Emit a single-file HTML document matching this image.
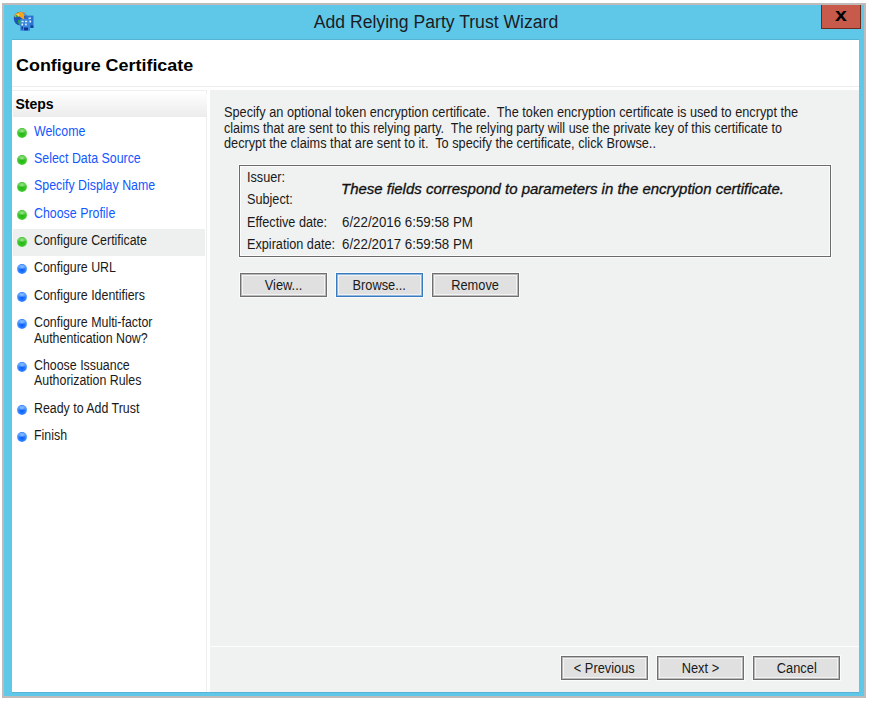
<!DOCTYPE html>
<html><head><meta charset="utf-8">
<style>
*{margin:0;padding:0;box-sizing:border-box}
html,body{width:870px;height:702px;background:#fff;overflow:hidden;position:relative;font-family:"Liberation Sans",sans-serif;color:#1a1a1a}
.a{position:absolute;white-space:nowrap}
#frame{position:absolute;left:2px;top:3px;width:864px;height:695px;background:#bfbbbb}
#cyan{position:absolute;left:4px;top:5px;width:860px;height:691px;background:#5fc8e9}
#content{position:absolute;left:12px;top:40px;width:847px;height:652px;background:#fff;box-shadow:0 -1px 0 #55b3d3,0 1px 0 #5ab3d6}
#title{left:6px;width:860px;top:12px;line-height:20px;font-size:17.6px;text-align:center;color:#1c1c24}
#closex{left:821px;top:5px;width:40px;height:24px;text-align:center;font-size:19px;font-weight:bold;line-height:20px;color:#000;transform:scaleX(1.12)}
#close{left:821px;top:5px;width:40px;height:24px;background:#c75a4b;border:1px solid #6e2a1c;border-top:none}
#hdr{left:16px;top:56px;line-height:20px;font-size:16px;font-weight:bold;color:#000;transform:scaleX(1.12);transform-origin:0 0}
.sep{position:absolute;height:1px;background:#ededed}
#left{position:absolute;left:12px;top:90px;width:195px;height:602px;background:#fff;border-top:1px solid #efefef;border-right:1px solid #eeeeee}
#stepsbar{position:absolute;left:13px;top:94px;width:194px;height:23px;background:linear-gradient(#fdfdfd,#ececec)}
#steps{left:15.5px;top:96px;line-height:16px;font-size:14px;font-weight:bold;color:#000}
.it{position:absolute;left:34px;font-size:14px;line-height:15.5px;color:#1a1a1a;white-space:nowrap;transform:scaleX(0.885);transform-origin:0 0}
.lk{color:#1257ff}
.dot{position:absolute;left:17px;width:10px;height:10px;border-radius:50%}
.g{background:radial-gradient(ellipse 40% 25% at 50% 30%,rgba(200,240,190,.8),rgba(200,240,190,0)),radial-gradient(circle at 50% 55%,#1fb80f 0,#36c425 45%,#5fd04c 62%,#22b014 80%,#22a814 100%)}
.b{background:radial-gradient(ellipse 40% 25% at 50% 30%,rgba(170,215,255,.85),rgba(170,215,255,0)),radial-gradient(circle at 50% 58%,#0658ff 0,#2a7cff 42%,#5aa2ff 60%,#1a68ff 80%,#0f5cf5 100%)}
#hl{position:absolute;left:13px;top:229px;width:192px;height:27px;background:#eef0f0}
#right{position:absolute;left:210px;top:90px;width:649px;height:602px;background:#f0f1f1}
#wline{position:absolute;left:210px;top:646px;width:649px;height:1px;background:#fdfdfd}
.p{left:224px;font-size:14px;line-height:15.5px;color:#1a1a1a;transform:scaleX(0.905);transform-origin:0 0}
#box{position:absolute;left:239px;top:165px;width:592px;height:92px;border:1px solid #6a6a6a;box-shadow:0 0 0 1px #fcfcfc,inset 0 0 0 1px #fcfcfc}
.lb{font-size:14px;line-height:15.5px;color:#1a1a1a;transform:scaleX(0.905);transform-origin:0 0}
#ital{left:341px;font-size:14px;font-style:italic;line-height:15.5px;color:#111;-webkit-text-stroke:0.3px #111;transform:scaleX(1.07);transform-origin:0 0}
.btn{position:absolute;width:87px;height:24px;background:#e0e0e0;border:1px solid #707070;box-shadow:0 0 0 1px #fbfbfb,inset 0 0 0 1px #b8b8b8,inset 0 0 0 2px #f3f3f3;font-size:14px;line-height:22px;text-align:center;color:#1a1a1a}
.btn span{display:inline-block;transform:scaleX(0.915)}
.btn.f{border-color:#3a7bbf;box-shadow:0 0 0 1px #fbfbfb,inset 0 0 0 1px #8fb6dc,inset 0 0 0 2px #f2f2f2}
</style></head><body>
<div id="frame"></div>
<div id="cyan"></div>
<div class="a" id="title">Add Relying Party Trust Wizard</div>
<div class="a" id="close"></div>
<div class="a" id="closex">x</div>
<svg class="a" style="left:10px;top:8px" width="30" height="25" viewBox="0 0 30 25">
<circle cx="10.5" cy="10.6" r="6.8" fill="#1d56b8"/>
<path d="M6 5.5 Q10 3 14.5 4.2 L16.5 6 L14 8 L14.5 11.5 L12 10.5 L9.5 8.5 L7 8 L5 9.5 L4.3 7.5 Z" fill="#f3a61a"/>
<path d="M6.5 6.5 L8.5 5.8 L9.5 7.6 L7.8 9 Z" fill="#ffd27a"/>
<path d="M5.5 7 L7.5 7.2 L8 8.8 L6.5 9.2 Z" fill="#25b526"/>
<path d="M8 12 L11 12.5 L11.5 16 L10 17.5 L8.5 15.5 Z" fill="#2cb52a"/>
<path d="M12 3.8 Q15.5 4.5 17 7 L15 8 Z" fill="#4f9be6"/>
<rect x="15.3" y="7.6" width="8.2" height="12.4" fill="#2a73d0"/>
<rect x="10.3" y="11" width="9.7" height="11.8" fill="#3a87dc"/>
<rect x="11.5" y="12.8" width="2.2" height="1.4" fill="#d8ecff"/>
<rect x="15" y="12.8" width="2.2" height="1.4" fill="#d8ecff"/>
<rect x="11.5" y="15.6" width="1.6" height="1.8" fill="#e6f3ff"/>
<rect x="15" y="15.6" width="1.8" height="1.8" fill="#cfe6ff"/>
<rect x="18.5" y="9.5" width="2.5" height="1.4" fill="#cfe6ff"/>
<rect x="19.5" y="12.5" width="1.6" height="2" fill="#e6f3ff"/>
<rect x="11.5" y="18.5" width="1.4" height="3" fill="#0d3f9f"/>
<rect x="14" y="19.5" width="4" height="2.8" fill="#0a3590"/>
<rect x="20.7" y="17.6" width="2.6" height="2" fill="#0a3590"/>
</svg>
<div id="content"></div>
<div class="a" id="hdr">Configure Certificate</div>
<div class="sep" style="left:12px;top:86px;width:847px"></div>
<div id="left"></div>
<div id="stepsbar"></div>
<div class="a" id="steps">Steps</div>
<div id="hl"></div>

<div class="dot g" style="top:128px"></div><div class="it lk" style="top:123.75px">Welcome</div>
<div class="dot g" style="top:155px"></div><div class="it lk" style="top:151.05px">Select Data Source</div>
<div class="dot g" style="top:182px"></div><div class="it lk" style="top:178.45px">Specify Display Name</div>
<div class="dot g" style="top:210px"></div><div class="it lk" style="top:205.75px">Choose Profile</div>
<div class="dot g" style="top:237px"></div><div class="it" style="top:233.05px">Configure Certificate</div>
<div class="dot b" style="top:264px"></div><div class="it" style="top:260.45px">Configure URL</div>
<div class="dot b" style="top:292px"></div><div class="it" style="top:287.75px">Configure Identifiers</div>
<div class="dot b" style="top:319px"></div><div class="it" style="top:315.05px">Configure Multi-factor<br>Authentication Now?</div>
<div class="dot b" style="top:362px"></div><div class="it" style="top:357.95px">Choose Issuance<br>Authorization Rules</div>
<div class="dot b" style="top:405px"></div><div class="it" style="top:400.75px">Ready to Add Trust</div>
<div class="dot b" style="top:432px"></div><div class="it" style="top:428.05px">Finish</div>

<div id="right"></div>
<div id="wline"></div>
<div class="a p" style="top:105.25px;transform:scaleX(0.909)">Specify an optional token encryption certificate.&nbsp; The token encryption certificate is used to encrypt the</div>
<div class="a p" style="top:120.75px;transform:scaleX(0.896)">claims that are sent to this relying party.&nbsp; The relying party will use the private key of this certificate to</div>
<div class="a p" style="top:136.25px;transform:scaleX(0.909)">decrypt the claims that are sent to it.&nbsp; To specify the certificate, click Browse..</div>

<div id="box"></div>
<div class="a lb" style="left:247px;top:170px">Issuer:</div>
<div class="a lb" style="left:247px;top:191.75px">Subject:</div>
<div class="a lb" style="left:247px;top:214.75px">Effective date:</div>
<div class="a lb" style="left:342px;top:214.75px;transform:scaleX(0.95)">6/22/2016 6:59:58 PM</div>
<div class="a lb" style="left:247px;top:236.75px">Expiration date:</div>
<div class="a lb" style="left:342px;top:236.75px;transform:scaleX(0.95)">6/22/2017 6:59:58 PM</div>
<div class="a" id="ital" style="top:182px">These fields correspond to parameters in the encryption certificate.</div>

<div class="btn" style="left:240px;top:273px"><span>View...</span></div>
<div class="btn f" style="left:336px;top:273px"><span>Browse...</span></div>
<div class="btn" style="left:432px;top:273px"><span>Remove</span></div>

<div class="btn" style="left:561px;top:656px"><span>&lt; Previous</span></div>
<div class="btn" style="left:657px;top:656px"><span>Next &gt;</span></div>
<div class="btn" style="left:753px;top:656px"><span>Cancel</span></div>
</body></html>
